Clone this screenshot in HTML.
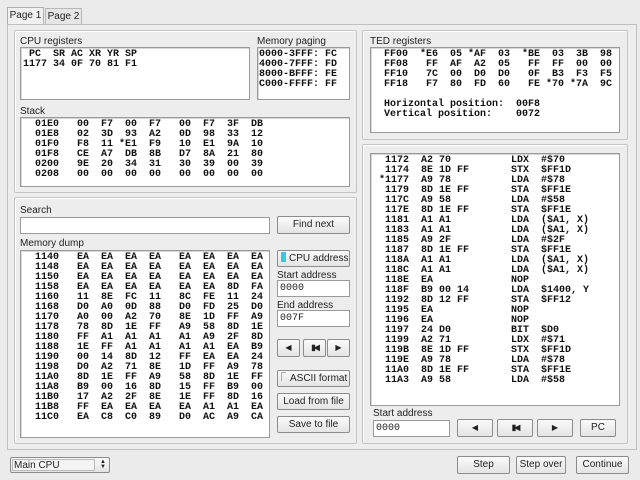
<!DOCTYPE html>
<html><head><style>
*{box-sizing:border-box;margin:0;padding:0}
body{width:640px;height:480px;background:#ebebeb;position:relative;overflow:hidden;font-family:"Liberation Sans",sans-serif;font-size:10px;color:#222}
div{white-space:nowrap}
.a{position:absolute}
.box{position:absolute;background:#fff;border:1px solid #9a9a9a;box-shadow:inset 1px 1px 0 #d8d8d8}
pre{position:absolute;font-family:"Liberation Mono",monospace;font-weight:bold;font-size:10px;line-height:10px;color:#111;white-space:pre}
.btn{position:absolute;border:1px solid #8c8c8c;border-radius:2px;background:linear-gradient(#fafafa,#e4e4e4);text-align:center;font-size:10px;line-height:15px;color:#222}
.grp{position:absolute;border:1px solid #c4c4c4;border-radius:2px;box-shadow:1px 1px 0 #fff inset}
.lbl{position:absolute;font-size:10px;line-height:11px}
.inp{position:absolute;background:#fff;border:1px solid #9a9a9a;font-family:"Liberation Mono",monospace;font-size:10px;line-height:15px;padding-left:2px}
</style></head><body>
<div class="a" style="left:7px;top:7px;width:37px;height:18px;border:1px solid #b0b0b0;border-bottom:none;background:#f0f0f0;line-height:16px;text-align:center">Page 1</div>
<div class="a" style="left:45px;top:8px;width:37px;height:16px;border:1px solid #b8b8b8;border-bottom:none;background:#e6e6e6;line-height:15px;text-align:center">Page 2</div>
<div class="a" style="left:7px;top:24px;width:630px;height:426px;border:1px solid #c0c0c0;background:#ededed"></div>

<div class="grp" style="left:14px;top:30px;width:343px;height:163px"></div>
<div class="grp" style="left:14px;top:197px;width:343px;height:247px"></div>
<div class="grp" style="left:362px;top:30px;width:266px;height:110px"></div>
<div class="grp" style="left:362px;top:144px;width:266px;height:300px"></div>

<div class="lbl" style="left:20px;top:36px">CPU registers</div>
<div class="box" style="left:20px;top:47px;width:230px;height:53px"></div>
<pre style="left:23px;top:50px"> PC  SR AC XR YR SP
1177 34 0F 70 81 F1</pre>

<div class="lbl" style="left:257px;top:36px">Memory paging</div>
<div class="box" style="left:257px;top:47px;width:93px;height:53px"></div>
<pre style="left:259px;top:50px">0000-3FFF: FC
4000-7FFF: FD
8000-BFFF: FE
C000-FFFF: FF</pre>

<div class="lbl" style="left:20px;top:106px">Stack</div>
<div class="box" style="left:20px;top:117px;width:330px;height:70px"></div>
<pre style="left:35px;top:120px">01E0   00  F7  00  F7   00  F7  3F  DB
01E8   02  3D  93  A2   0D  98  33  12
01F0   F8  11 *E1  F9   10  E1  9A  10
01F8   CE  A7  DB  8B   D7  8A  21  80
0200   9E  20  34  31   30  39  00  39
0208   00  00  00  00   00  00  00  00</pre>

<div class="lbl" style="left:20px;top:205px">Search</div>
<div class="inp" style="left:20px;top:217px;width:250px;height:17px"></div>
<div class="btn" style="left:277px;top:216px;width:73px;height:18px">Find next</div>

<div class="lbl" style="left:20px;top:238px">Memory dump</div>
<div class="box" style="left:20px;top:250px;width:250px;height:188px"></div>
<pre style="left:35px;top:253px">1140   EA  EA  EA  EA   EA  EA  EA  EA
1148   EA  EA  EA  EA   EA  EA  EA  EA
1150   EA  EA  EA  EA   EA  EA  EA  EA
1158   EA  EA  EA  EA   EA  EA  8D  FA
1160   11  8E  FC  11   8C  FE  11  24
1168   D0  A0  0D  88   D0  FD  25  D0
1170   A0  00  A2  70   8E  1D  FF  A9
1178   78  8D  1E  FF   A9  58  8D  1E
1180   FF  A1  A1  A1   A1  A9  2F  8D
1188   1E  FF  A1  A1   A1  A1  EA  B9
1190   00  14  8D  12   FF  EA  EA  24
1198   D0  A2  71  8E   1D  FF  A9  78
11A0   8D  1E  FF  A9   58  8D  1E  FF
11A8   B9  00  16  8D   15  FF  B9  00
11B0   17  A2  2F  8E   1E  FF  8D  16
11B8   FF  EA  EA  EA   EA  A1  A1  EA
11C0   EA  C8  C0  89   D0  AC  A9  CA</pre>

<div class="btn" style="left:277px;top:250px;width:73px;height:17px;text-align:left;padding-left:3px"><span style="display:inline-block;width:5px;height:10px;background:#3cc8d8;vertical-align:-1px;margin-right:3px"></span>CPU address</div>
<div class="lbl" style="left:277px;top:270px">Start address</div>
<div class="inp" style="left:277px;top:280px;width:73px;height:17px">0000</div>
<div class="lbl" style="left:277px;top:300px">End address</div>
<div class="inp" style="left:277px;top:310px;width:73px;height:17px">007F</div>
<div class="btn" style="left:277px;top:339px;width:23px;height:18px;font-size:8px">&#9664;</div>
<div class="btn" style="left:303px;top:339px;width:23px;height:18px;font-size:8px;font-weight:bold;letter-spacing:-2px">&#9646;&#9664;</div>
<div class="btn" style="left:327px;top:339px;width:23px;height:18px;font-size:8px">&#9654;</div>
<div class="btn" style="left:277px;top:370px;width:73px;height:17px;text-align:left;padding-left:3px"><span style="display:inline-block;width:5px;height:9px;border:1px solid #aaa;border-right:none;border-bottom:none;margin-right:4px"></span>ASCII format</div>
<div class="btn" style="left:277px;top:393px;width:73px;height:17px">Load from file</div>
<div class="btn" style="left:277px;top:416px;width:73px;height:17px">Save to file</div>

<div class="lbl" style="left:370px;top:36px">TED registers</div>
<div class="box" style="left:370px;top:47px;width:250px;height:86px"></div>
<pre style="left:384px;top:50px">FF00  *E6  05 *AF  03  *BE  03  3B  98
FF08   FF  AF  A2  05   FF  FF  00  00
FF10   7C  00  D0  D0   0F  B3  F3  F5
FF18   F7  80  FD  60   FE *70 *7A  9C

Horizontal position:  00F8
Vertical position:    0072</pre>

<div class="box" style="left:370px;top:153px;width:250px;height:253px"></div>
<pre style="left:373px;top:156px">  1172  A2 70          LDX  #$70
  1174  8E 1D FF       STX  $FF1D
 *1177  A9 78          LDA  #$78
  1179  8D 1E FF       STA  $FF1E
  117C  A9 58          LDA  #$58
  117E  8D 1E FF       STA  $FF1E
  1181  A1 A1          LDA  ($A1, X)
  1183  A1 A1          LDA  ($A1, X)
  1185  A9 2F          LDA  #$2F
  1187  8D 1E FF       STA  $FF1E
  118A  A1 A1          LDA  ($A1, X)
  118C  A1 A1          LDA  ($A1, X)
  118E  EA             NOP
  118F  B9 00 14       LDA  $1400, Y
  1192  8D 12 FF       STA  $FF12
  1195  EA             NOP
  1196  EA             NOP
  1197  24 D0          BIT  $D0
  1199  A2 71          LDX  #$71
  119B  8E 1D FF       STX  $FF1D
  119E  A9 78          LDA  #$78
  11A0  8D 1E FF       STA  $FF1E
  11A3  A9 58          LDA  #$58</pre>
<div class="lbl" style="left:373px;top:408px">Start address</div>
<div class="inp" style="left:373px;top:420px;width:77px;height:17px">0000</div>
<div class="btn" style="left:457px;top:419px;width:36px;height:18px;font-size:8px">&#9664;</div>
<div class="btn" style="left:497px;top:419px;width:36px;height:18px;font-size:8px;font-weight:bold;letter-spacing:-2px">&#9646;&#9664;</div>
<div class="btn" style="left:537px;top:419px;width:36px;height:18px;font-size:8px">&#9654;</div>
<div class="btn" style="left:580px;top:419px;width:36px;height:18px">PC</div>

<div class="a" style="left:10px;top:457px;width:100px;height:16px;border:1px solid #8c8c8c;border-radius:2px;background:linear-gradient(#fafafa,#e4e4e4)">
<div class="a" style="left:1px;top:1px;width:83px;height:12px;background:#f4f4f4;border:1px solid #bbb;line-height:11px;padding-left:1px">Main CPU</div>
<div class="a" style="left:89px;top:2px;font-size:6px;line-height:5px">&#9650;<br>&#9660;</div></div>
<div class="btn" style="left:457px;top:456px;width:53px;height:18px">Step</div>
<div class="btn" style="left:516px;top:456px;width:50px;height:18px">Step over</div>
<div class="btn" style="left:576px;top:456px;width:53px;height:18px">Continue</div>
</body></html>
